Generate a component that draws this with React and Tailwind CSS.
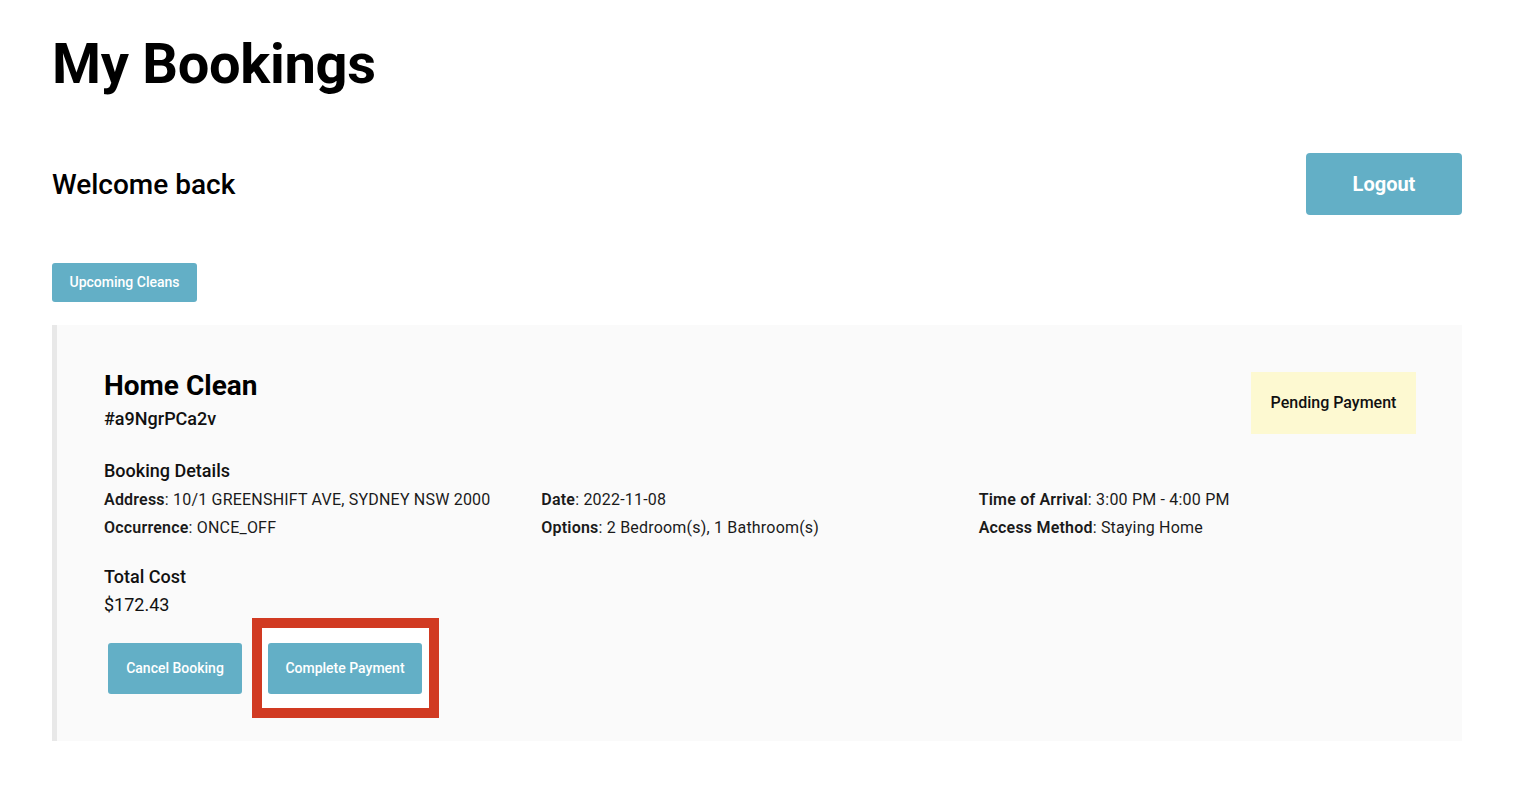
import React from "react";

function Field({ label, value }) {
  return (
    <div>
      <span className="font-semibold">{label}</span>: {value}
    </div>
  );
}

export default function App() {
  return (
    <div
      className="min-h-screen bg-white text-black"
      style={{ fontFamily: "Roboto, 'Noto Sans', Arial, sans-serif" }}
    >
      <div className="pl-[52px] pr-[72px] pt-[36px]">
        <h1 className="text-[56px] leading-none font-bold tracking-[-0.3px]">My Bookings</h1>

        <div className="mt-[61px] flex items-center justify-between">
          <h2 className="text-[28px] leading-[34px] font-medium mt-[2px]">Welcome back</h2>
          <button className="w-[156px] h-[62px] rounded-[4px] bg-[#63afc6] text-white text-[20px] font-bold">
            Logout
          </button>
        </div>

        <button className="mt-[48px] w-[145px] h-[39px] rounded-[3px] bg-[#63afc6] text-white text-[14px] font-medium">
          Upcoming Cleans
        </button>

        <div className="mt-[23px] bg-[#fafafa] border-l-[5px] border-[#e8e8e8] pl-[47px] pr-[46px] pt-[44px] pb-[47px]">
          <div className="flex items-start justify-between">
            <div>
              <div className="text-[28px] leading-[34px] font-bold">Home Clean</div>
              <div className="mt-[4px] text-[18px] leading-[24px] font-medium text-[#111]">#a9NgrPCa2v</div>
            </div>
            <div className="mt-[3px] w-[165px] h-[62px] flex items-center justify-center bg-[#fdf9d1] text-[16px] font-medium text-[#111]">
              Pending Payment
            </div>
          </div>

          <div className="mt-[25px] text-[18px] leading-[24px] font-medium text-[#111]">Booking Details</div>
          <div className="mt-[3px] grid grid-cols-3 text-[16px] leading-[28px] tracking-[0.2px] text-[#1a1a1a]">
            <div>
              <Field label="Address" value="10/1 GREENSHIFT AVE, SYDNEY NSW 2000" />
              <Field label="Occurrence" value="ONCE_OFF" />
            </div>
            <div>
              <Field label="Date" value="2022-11-08" />
              <Field label="Options" value="2 Bedroom(s), 1 Bathroom(s)" />
            </div>
            <div>
              <Field label="Time of Arrival" value="3:00 PM - 4:00 PM" />
              <Field label="Access Method" value="Staying Home" />
            </div>
          </div>

          <div className="mt-[23px] text-[18px] leading-[24px] font-medium text-[#111]">Total Cost</div>
          <div className="mt-[4px] text-[18px] leading-[24px] text-[#111]">$172.43</div>

          <div className="mt-[26px] flex items-center">
            <button className="ml-[4px] w-[134px] h-[51px] rounded-[3px] bg-[#63afc6] text-white text-[14px] font-medium">
              Cancel Booking
            </button>
            <div className="relative ml-[26px]">
              <span className="absolute left-[-16px] top-[-25px] w-[187px] h-[100px] border-[10px] border-[#d13a22] bg-white"></span>
              <button className="relative w-[154px] h-[51px] rounded-[3px] bg-[#63afc6] text-white text-[14px] font-medium">
                Complete Payment
              </button>
            </div>
          </div>
        </div>
      </div>
    </div>
  );
}
